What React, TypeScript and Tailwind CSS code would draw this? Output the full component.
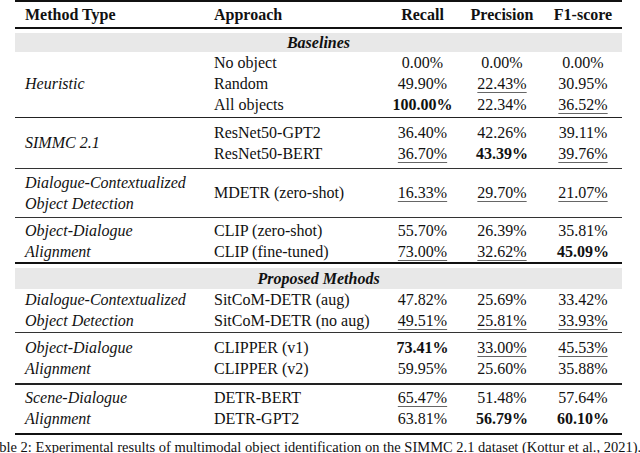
import React from "react";

type Cell = { v: string; b?: boolean; u?: boolean };
type Row = { approach: string; nums: Cell[] };
type Group = { method: string[]; rows: Row[]; pad: string; rule: string };

const c = (v: string, f = "") => ({ v, b: f.includes("b"), u: f.includes("u") });

const baselines: Group[] = [
  {
    method: ["Heuristic"],
    pad: "pt-0 pb-[2px]",
    rule: "h-px bg-[#222]",
    rows: [
      { approach: "No object", nums: [c("0.00%"), c("0.00%"), c("0.00%")] },
      { approach: "Random", nums: [c("49.90%"), c("22.43%", "u"), c("30.95%")] },
      { approach: "All objects", nums: [c("100.00%", "b"), c("22.34%"), c("36.52%", "u")] },
    ],
  },
  {
    method: ["SIMMC 2.1"],
    pad: "pt-[4px] pb-[4px]",
    rule: "h-px bg-[#333]",
    rows: [
      { approach: "ResNet50-GPT2", nums: [c("36.40%"), c("42.26%"), c("39.11%")] },
      { approach: "ResNet50-BERT", nums: [c("36.70%", "u"), c("43.39%", "b"), c("39.76%", "u")] },
    ],
  },
  {
    method: ["Dialogue-Contextualized", "Object Detection"],
    pad: "pt-[3px] pb-[3px]",
    rule: "h-px bg-[#333]",
    rows: [{ approach: "MDETR (zero-shot)", nums: [c("16.33%", "u"), c("29.70%", "u"), c("21.07%", "u")] }],
  },
  {
    method: ["Object-Dialogue", "Alignment"],
    pad: "pt-[2px] pb-0",
    rule: "h-[2px] bg-[#111]",
    rows: [
      { approach: "CLIP (zero-shot)", nums: [c("55.70%"), c("26.39%"), c("35.81%")] },
      { approach: "CLIP (fine-tuned)", nums: [c("73.00%", "u"), c("32.62%", "u"), c("45.09%", "b")] },
    ],
  },
];

const proposed: Group[] = [
  {
    method: ["Dialogue-Contextualized", "Object Detection"],
    pad: "pt-0 pb-[1px]",
    rule: "h-px bg-[#333]",
    rows: [
      { approach: "SitCoM-DETR (aug)", nums: [c("47.82%"), c("25.69%"), c("33.42%")] },
      { approach: "SitCoM-DETR (no aug)", nums: [c("49.51%", "u"), c("25.81%", "u"), c("33.93%", "u")] },
    ],
  },
  {
    method: ["Object-Dialogue", "Alignment"],
    pad: "pt-[4px] pb-[4px]",
    rule: "h-[2px] bg-[#222]",
    rows: [
      { approach: "CLIPPER (v1)", nums: [c("73.41%", "b"), c("33.00%", "u"), c("45.53%", "u")] },
      { approach: "CLIPPER (v2)", nums: [c("59.95%"), c("25.60%"), c("35.88%")] },
    ],
  },
  {
    method: ["Scene-Dialogue", "Alignment"],
    pad: "pt-[2px] pb-[4px]",
    rule: "h-[2px] bg-[#111]",
    rows: [
      { approach: "DETR-BERT", nums: [c("65.47%", "u"), c("51.48%"), c("57.64%")] },
      { approach: "DETR-GPT2", nums: [c("63.81%"), c("56.79%", "b"), c("60.10%", "b")] },
    ],
  },
];

const numW = ["w-[65px]", "w-[94px]", "w-[68px]"];

function Num({ cell, i }: { cell: Cell; i: number }) {
  return (
    <div className={`${numW[i]} text-center`}>
      <span
        className={`${cell.b ? "font-bold" : ""} ${
          cell.u ? "underline decoration-[#666] decoration-1 underline-offset-[3px]" : ""
        }`}
      >
        {cell.v}
      </span>
    </div>
  );
}

function GroupBlock({ g }: { g: Group }) {
  return (
    <>
      <div className={`flex ${g.pad}`}>
        <div className="w-[189px] pl-[10px] flex flex-col justify-center italic">
          {g.method.map((m) => (
            <div key={m}>{m}</div>
          ))}
        </div>
        <div className="flex flex-col justify-center">
          {g.rows.map((r) => (
            <div key={r.approach} className="flex h-[21px] items-center">
              <div className="w-[186px] pl-[10px]">{r.approach}</div>
              {r.nums.map((n, i) => (
                <Num key={i} cell={n} i={i} />
              ))}
            </div>
          ))}
        </div>
      </div>
      <div className={g.rule} />
    </>
  );
}

function Band({ label, cls }: { label: string; cls: string }) {
  return (
    <div className={`bg-[#e8e8e8] text-center font-bold italic flex items-center justify-center ${cls}`}>
      {label}
    </div>
  );
}

export default function App() {
  return (
    <div className="w-[640px] h-[453px] overflow-hidden bg-white text-[#111] font-['Liberation_Serif',serif] text-[16px] leading-[21px]">
      <div className="ml-[15px] w-[607px]">
        <div className="h-[2px] bg-[#111]" />
        <div className="flex h-[25px] items-center font-bold">
          <div className="w-[189px] pl-[10px]">Method Type</div>
          <div className="w-[186px] pl-[10px]">Approach</div>
          <div className="w-[65px] text-center">Recall</div>
          <div className="w-[94px] text-center">Precision</div>
          <div className="w-[68px] text-center">F1-score</div>
        </div>
        <div className="h-[1.5px] bg-[#111]" />
        <div className="h-[4px]" />
        <Band label="Baselines" cls="h-[19px]" />
        {baselines.map((g, i) => (
          <GroupBlock key={i} g={g} />
        ))}
        <div className="h-[4px]" />
        <Band label="Proposed Methods" cls="h-[21px]" />
        {proposed.map((g, i) => (
          <GroupBlock key={i} g={g} />
        ))}
      </div>
      <div className="pt-[3px] -ml-[15px] w-[700px] text-[14.5px] leading-[19px]">
        Table 2: Experimental results of multimodal object identification on the SIMMC 2.1 dataset (Kottur et al., 2021).
      </div>
    </div>
  );
}
